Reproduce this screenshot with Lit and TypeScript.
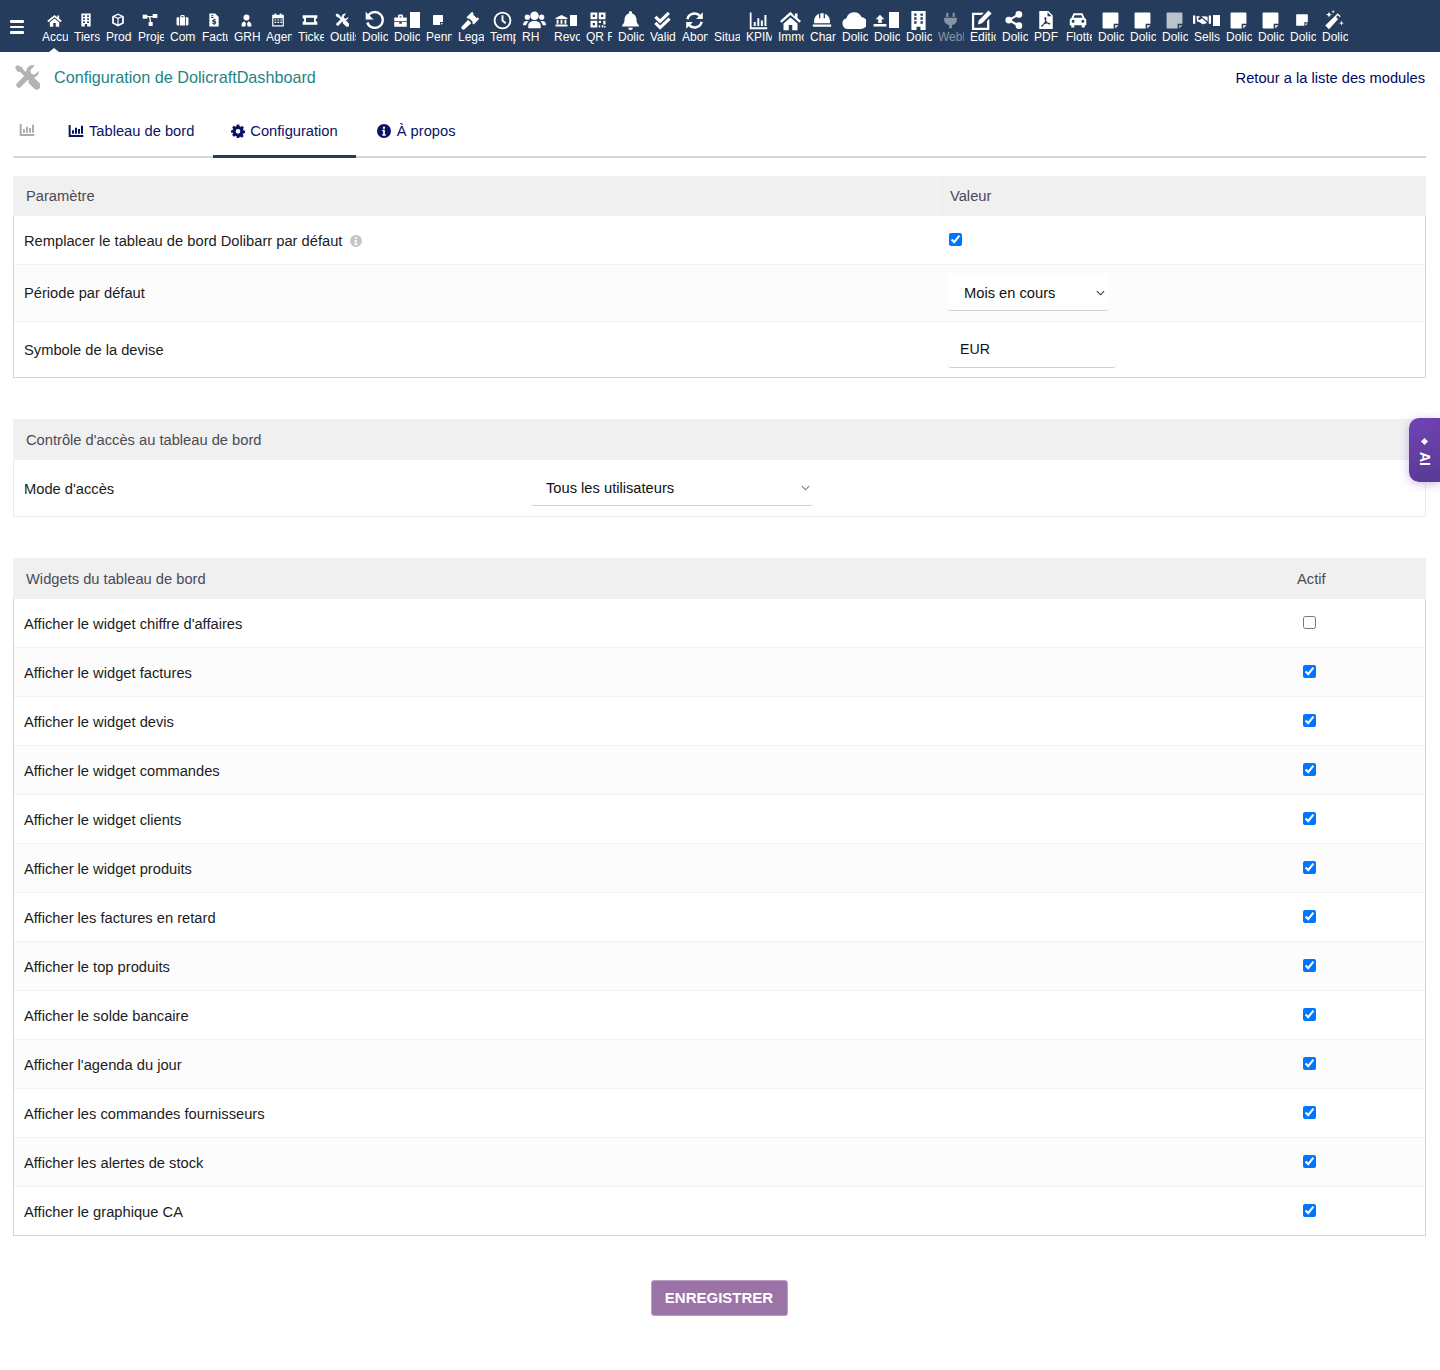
import { LitElement, html, css, svg } from "lit";
import { customElement } from "lit/decorators.js";

// hand drawn icons, all on a 24x24 box, filled with currentColor unless stated
const ICONS: Record<string, unknown> = {
    home: svg`<path d="M12 3 0.5 12.5 2.3 14.6 12 6.6l9.7 8 1.8-2.1-4-3.3V4h-3v2.7z"/><path d="M12 8.6 4.5 14.8V22h5.5v-6h4v6h5.5v-7.2z"/>`,
    building: svg`<path fill-rule="evenodd" d="M4 1h16v22h-6v-4h-4v4H4zM7 4v3h3V4zm7 0v3h3V4zM7 9v3h3V9zm7 0v3h3V9zM7 14v3h3v-3zm7 0v3h3v-3z"/>`,
    cube: svg`<path fill-rule="evenodd" d="M12 1 22 5.5v12.5L12 23 2 18V5.5zM5 7.2v9l6 3v-9.4zm8 2.6v9.4l6-3V7.300zM6.500 5.600 12 8l5.500-2.400L12 3.300z"/>`,
    project: svg`<rect x="1" y="4" width="7" height="6"/><rect x="16" y="3" width="7" height="6"/><rect x="10" y="15" width="6" height="6"/><path d="M7 6h10v2H12.500l1.500 8h-2L10.500 8H7z"/>`,
    briefcase: svg`<path fill-rule="evenodd" d="M8 6V4a2 2 0 0 1 2-2h4a2 2 0 0 1 2 2v2h5a2 2 0 0 1 2 2v11a2 2 0 0 1-2 2H3a2 2 0 0 1-2-2V8a2 2 0 0 1 2-2zm2-2v2h4V4zM5.500 6v15h1.500V6zM17 6v15h1.500V6z"/>`,
    toolbox: svg`<path fill-rule="evenodd" d="M8 7V4.500A2 2 0 0 1 10 2.500h4a2 2 0 0 1 2 2V7h6v6H2V7zm2.500-2v2h3V5zM2 14.500h8V17h4v-2.500h8V22H2z"/>`,
    invoice: svg`<path fill-rule="evenodd" d="M4 1h10l6 6v16H4zM7 4v1.500h4V4zm0 3v1.500h4V7zm6.500 3h-2v1.200c-1.500.3-2.500 1.200-2.500 2.500 0 1.400 1 2 2.700 2.500 1 .3 1.300.5 1.300.9s-.4.6-1 .6c-.8 0-1.600-.3-2.300-.8L8.700 18c.7.5 1.700.9 2.800 1v1.500h2V19c1.500-.3 2.500-1.200 2.500-2.600s-1-2.100-2.700-2.600c-1-.3-1.300-.5-1.300-.8s.3-.6 1-.6 1.300.2 1.900.6l1-1.400c-.7-.5-1.500-.8-2.400-.9z"/>`,
    usertie: svg`<circle cx="12" cy="6.500" r="5.500"/><path d="M3 23v-3c0-3.500 2.500-6 6-6l2 4-1 5zM21 23v-3c0-3.500-2.500-6-6-6l-2 4 1 5z"/>`,
    calendar: svg`<path fill-rule="evenodd" d="M6 1h3v2h6V1h3v2h4v20H2V3h4zM4 9v12h16V9zm2 2h3v2H6zm5 0h3v2h-3zm5 0h3v2h-3zM6 15h3v2H6zm5 0h3v2h-3zm5 0h3v2h-3z"/>`,
    ticket: svg`<path fill-rule="evenodd" d="M1 5h22v4.500a2.500 2.500 0 0 0 0 5V19H1v-4.500a2.500 2.500 0 0 0 0-5zm5 3.500v7h12v-7z"/>`,
    tools: svg`<path d="M3 1 1 3l2 4 3 .5 8 8.500-1 1 5.500 5.500a3.500 3.500 0 0 0 5-5L18 12l-1 1-8.500-8L7.500 3z"/><path d="M17 1a6 6 0 0 0-5.500 8L2 18.500a3 3 0 0 0 3.500 3.500l9.500-9.500a6 6 0 0 0 8-6l-4 3.500-3-1-1-3L19 1.300z"/>`,
    undo: svg`<path fill="none" stroke="currentColor" stroke-width="2.800" d="M5.200 6.500A9.500 9.500 0 1 1 4 15"/><path d="M2 2v9.500h9.500z"/>`,
    note: svg`<path d="M3 2h18a1 1 0 0 1 1 1v13h-6v6H3a1 1 0 0 1-1-1V3a1 1 0 0 1 1-1z"/><path d="M18 18h4l-4 4z"/>`,
    gavel: svg`<path d="M14 1 7 8l2 2 1-1 5 5-1 1 2 2 7-7-2-2-1 1-5-5 1-1z"/><path d="M9 11 1 19.500a2.500 2.500 0 0 0 3.500 3.500L13 15z"/>`,
    clock: svg`<circle cx="12" cy="12" r="10" fill="none" stroke="currentColor" stroke-width="2.400"/><path fill="none" stroke="currentColor" stroke-width="2.400" d="M12 5.500V12l4 3.500"/>`,
    users: svg`<circle cx="12" cy="7" r="4.500"/><circle cx="4.500" cy="8.500" r="2.700"/><circle cx="19.500" cy="8.500" r="2.700"/><path d="M5.500 20v-2.500c0-3 2.500-5 6.500-5s6.500 2 6.500 5V20zM0 16.500c0-2.500 1.500-4 4-4 .6 0 1.500.2 2 .5-1.500 1-2.300 2.300-2.500 4H0zM24 16.500c0-2.500-1.500-4-4-4-.6 0-1.500.2-2 .5 1.500 1 2.300 2.300 2.500 4H24z"/>`,
    bank: svg`<path d="M12 2 1 7.500V9h22V7.500zM3 10.500h3.500V18H3zM10.200 10.500h3.500V18h-3.500zM17.500 10.500H21V18h-3.500zM1 19.500h22V23H1z"/>`,
    qr: svg`<path fill-rule="evenodd" d="M2 2h9v9H2zm3 3v3h3V5zM13 2h9v9h-9zm3 3v3h3V5zM2 13h9v9H2zm3 3v3h3v-3zM13 13h3v3h-3zM19 13h3v5h-3zM13 19h2v3h-2zM17 19h2v3h-2zM20 20h2v2h-2z"/>`,
    bell: svg`<path d="M12 0a2 2 0 0 0-2 2v1C6.500 4 4.500 6.800 4.500 10.500c0 4-1 5.500-3 7.500v1.500h21V18c-2-2-3-3.500-3-7.500 0-3.700-2-6.500-5.500-7.500V2a2 2 0 0 0-2-2zM9 21a3 3 0 0 0 6 0z"/>`,
    checks: svg`<path fill="none" stroke="currentColor" stroke-width="4" d="M3 7.500 9 13 20 2.500M3 15l6 6L21 9.500"/>`,
    sync: svg`<path fill="none" stroke="currentColor" stroke-width="3.200" d="M3 10.500a9.200 9.200 0 0 1 16-4M21 13.500a9.200 9.200 0 0 1-16 4"/><path d="M22.500 1.500v8.500H14zM1.500 22.500V14H10z"/>`,
    chart: svg`<path d="M1 2h2.200v18.500H23V23H1zM6 14h2.500v5H6zM10.500 9h2.500v10h-2.500zM15 12h2.500v7H15zM19.500 5H22v14h-2.500z"/>`,
    tabchart: svg`<path d="M1 3h3v15h19v3H1zM6 11h3v5H6zM10.500 7h3v9h-3zM15 9h3v7h-3zM19.500 4h3v12h-3z"/>`,
    house: svg`<path d="M12 2 0 12.500l1.800 2L12 5.600l10.200 8.900 1.800-2-4-3.500V4h-3v3.400z"/><path d="M12 8.500 4 15.500V23h6v-6h4v6h6v-7.500z"/>`,
    hardhat: svg`<path d="M10 4h4v6h1.500V4.500C19 5.800 21.500 9 21.500 13v3H2.500v-3c0-4 2.500-7.200 6-8.500V10H10zM1 17.500h22V20H1z"/>`,
    cloud: svg`<path d="M6 21a5.500 5.500 0 0 1-1.500-10.800A8 8 0 0 1 19.500 9 6 6 0 0 1 18.500 21z"/>`,
    upload: svg`<path d="M12 3 4.500 10.500H9V17h6v-6.500h4.500zM1 19h22v4H1z"/>`,
    tower: svg`<path fill-rule="evenodd" d="M3 0h18v24h-6.500v-4h-5v4H3zM6.500 3v3h3V3zm8 0v3h3V3zm-8 5v3h3V8zm8 0v3h3V8zm-8 5v3h3v-3zm8 0v3h3v-3z"/>`,
    plug: svg`<path d="M6 1h3v6H6zM15 1h3v6h-3zM3 8h18v3c0 4-3 7-7 7.500V23h-4v-4.500C6 18 3 15 3 11z"/>`,
    edit: svg`<path fill-rule="evenodd" d="M1 4h13l-2.500 2.500H3.500V20.500h14V13l2.500-2.500V23H1z"/><path d="M19 1.500 22.500 5 12 15.500 7.500 17l1-4.500z"/>`,
    share: svg`<circle cx="18.500" cy="4.500" r="4.500"/><circle cx="18.500" cy="19.500" r="4.500"/><circle cx="5" cy="12" r="4.500"/><path d="m5 10.500 12-7 1.500 2.500-12 7zM5 13.500l12 7 1.500-2.500-12-7z"/>`,
    pdf: svg`<path fill-rule="evenodd" d="M3 0h12l6 6v18H3zM14 1.500V7h5.500zM11 8c-1 0-1.300 1-1 2.500.1.800.4 1.700.8 2.500-.7 1.800-1.700 3.500-2.800 4.700-1.500.7-2.500 1.500-2.500 2.300 0 .8 1 1.200 1.800.5.800-.6 1.600-1.600 2.400-2.900 1.300-.5 2.800-.8 4-.9 1 .9 2 1.300 2.800 1.300 1 0 1.300-.8 1-1.400-.4-.7-1.800-.9-3-.8-.9-.9-1.700-2-2.300-3.200.4-1.500.5-3 0-3.800C11.900 8.300 11.500 8 11 8z"/>`,
    car: svg`<path fill-rule="evenodd" d="M6 3h12l3 6.500c1.300.5 2 1.500 2 2.800V19h-2v3h-4v-3H7v3H3v-3H1v-6.700C1 11 1.700 10 3 9.500zm1.500 2.500L6 9h12l-1.500-3.500zM5.500 11.500a2 2 0 1 0 0 4 2 2 0 0 0 0-4zm13 0a2 2 0 1 0 0 4 2 2 0 0 0 0-4z"/>`,
    handshake: svg`<path d="M0 6h3v11H0zM21 6h3v11h-3zM4.500 7h5L7 10c-.8 1.200.8 2.800 2.500 1.500L12 9.500l6.500 6-1.500 1.500-1-.8-1 1.300-1-.7-1 1.200-4-3-3.500-1zM11 7h4l4.500.5V14z"/>`,
    wand: svg`<path d="M16.500 4 20 7.500 6 23 1.500 18.500zM14.500 8.500 17 11l2-2.200-2.500-2.500z"/><path d="M6 2l1 2.500L9.500 5.500 7 6.500 6 9 5 6.500 2.500 5.500 5 4.500zM21 13l.8 2 2 .8-2 .8-.8 2-.8-2-2-.8 2-.8zM11 0l.6 1.400L13 2l-1.400.6L11 4l-.6-1.400L9 2l1.400-.6z"/>`,
    gear: svg`<path fill-rule="evenodd" d="M10 1h4l.7 3c.7.2 1.300.5 1.900.9l2.700-1.600 2.800 2.800L20.500 8.800c.4.600.6 1.200.8 1.900l2.700.7v4l-2.900.7c-.2.700-.5 1.300-.9 1.900l1.500 2.600-2.800 2.800-2.600-1.500c-.6.400-1.200.6-1.900.8L14 24h-4l-.7-2.900c-.7-.2-1.300-.5-1.900-.9l-2.600 1.500-2.800-2.800 1.500-2.600c-.4-.6-.6-1.200-.8-1.900L0 15v-4l2.700-.7c.2-.7.500-1.300.9-1.900L2.100 5.700 4.900 2.900 7.500 4.500c.6-.4 1.200-.7 1.900-.9zM12 8.500a4 4 0 1 0 0 8 4 4 0 0 0 0-8z"/>`,
    info: svg`<path fill-rule="evenodd" d="M12 0a12 12 0 1 1 0 24 12 12 0 0 1 0-24zm-1.800 4.500v3.500h3.600V4.500zM9 10v2.500h1.500v5H9V20h6v-2.500h-1.500V10z"/>`,
};

type NavItem = {
    label: string;
    icon?: string;
    size?: number;
    // some modules show a second sticky-note glyph next to their icon
    note?: "big" | "small";
    dim?: boolean;
    grey?: boolean;
};

const NAV: NavItem[] = [
    { label: "Accueil", icon: "home", size: 15 },
    { label: "Tiers", icon: "building", size: 14 },
    { label: "Produits", icon: "cube", size: 14 },
    { label: "Projets", icon: "project", size: 16 },
    { label: "Commerce", icon: "briefcase", size: 13 },
    { label: "Facturation", icon: "invoice", size: 14 },
    { label: "GRH", icon: "usertie", size: 13 },
    { label: "Agenda", icon: "calendar", size: 14 },
    { label: "Tickets", icon: "ticket", size: 16 },
    { label: "Outils", icon: "tools", size: 14 },
    { label: "Dolicraft", icon: "undo", size: 20 },
    { label: "Dolicraft", icon: "toolbox", size: 15, note: "big" },
    { label: "Pennylane", icon: "note", size: 12 },
    { label: "Legal", icon: "gavel", size: 19 },
    { label: "Temps", icon: "clock", size: 19 },
    { label: "RH", icon: "users", size: 23 },
    { label: "Revolut", icon: "bank", size: 13, note: "small" },
    { label: "QR Facture", icon: "qr", size: 18 },
    { label: "Dolicraft", icon: "bell", size: 19 },
    { label: "Validation", icon: "checks", size: 19 },
    { label: "Abonnements", icon: "sync", size: 19 },
    { label: "Situation" },
    { label: "KPIManager", icon: "chart", size: 19 },
    { label: "Immobilier", icon: "house", size: 21 },
    { label: "Chantiers", icon: "hardhat", size: 20 },
    { label: "Dolicraft", icon: "cloud", size: 24 },
    { label: "Dolicraft", icon: "upload", size: 14, note: "big" },
    { label: "Dolicraft", icon: "tower", size: 19 },
    { label: "Webhooks", icon: "plug", size: 17, dim: true },
    { label: "Edition", icon: "edit", size: 22 },
    { label: "Dolicraft", icon: "share", size: 18 },
    { label: "PDF", icon: "pdf", size: 18 },
    { label: "Flotte", icon: "car", size: 18 },
    { label: "Dolicraft", icon: "note", size: 19 },
    { label: "Dolicraft", icon: "note", size: 19 },
    { label: "Dolicraft", icon: "note", size: 19, grey: true },
    { label: "Sells", icon: "handshake", size: 18, note: "small" },
    { label: "Dolicraft", icon: "note", size: 19 },
    { label: "Dolicraft", icon: "note", size: 19 },
    { label: "Dolicraft", icon: "note", size: 14 },
    { label: "Dolicraft", icon: "wand", size: 20 },
];

const WIDGETS: { label: string; on: boolean }[] = [
    { label: "Afficher le widget chiffre d'affaires", on: false },
    { label: "Afficher le widget factures", on: true },
    { label: "Afficher le widget devis", on: true },
    { label: "Afficher le widget commandes", on: true },
    { label: "Afficher le widget clients", on: true },
    { label: "Afficher le widget produits", on: true },
    { label: "Afficher les factures en retard", on: true },
    { label: "Afficher le top produits", on: true },
    { label: "Afficher le solde bancaire", on: true },
    { label: "Afficher l'agenda du jour", on: true },
    { label: "Afficher les commandes fournisseurs", on: true },
    { label: "Afficher les alertes de stock", on: true },
    { label: "Afficher le graphique CA", on: true },
];

const icon = (name: string, size: number) => html`<svg
    class="ico"
    viewBox="0 0 24 24"
    width=${size}
    height=${size}
    fill="currentColor"
>
    ${ICONS[name]}
</svg>`;

const chevron = html`<svg class="chev" viewBox="0 0 10 6" width="9" height="6">
    <path d="M1 1l4 4 4-4" fill="none" stroke="currentColor" stroke-width="1.200" />
</svg>`;

@customElement("app-root")
export class AppRoot extends LitElement {
    private _renderNav(item: NavItem, i: number) {
        return html`
            <a class="nav-item ${item.dim ? "dim" : ""}">
                <span class="nav-ico ${item.grey ? "grey" : ""}">
                    ${item.icon ? icon(item.icon, item.size ?? 16) : ""}
                    ${item.note ? html`<span class="nav-note ${item.note}"></span>` : ""}
                </span>
                <span class="nav-label">${item.label}</span>
                ${i === 0 ? html`<span class="nav-caret"></span>` : ""}
            </a>
        `;
    }

    render() {
        return html`
            <header class="topbar">
                <div class="burger"><i></i><i></i><i></i></div>
                <nav class="nav">${NAV.map((n, i) => this._renderNav(n, i))}</nav>
            </header>

            <main class="page">
                <div class="title-row">
                    <span class="title-ico">${icon("tools", 26)}</span>
                    <h1>Configuration de DolicraftDashboard</h1>
                    <a class="back">Retour a la liste des modules</a>
                </div>

                <div class="tabs">
                    <span class="tab-logo">${icon("tabchart", 16)}</span>
                    <a class="tab">${icon("tabchart", 16)}Tableau de bord</a>
                    <a class="tab active">${icon("gear", 14)}Configuration</a>
                    <a class="tab">${icon("info", 14)}À propos</a>
                </div>

                <section class="tbl">
                    <div class="head two">
                        <div>Paramètre</div>
                        <div class="sep">Valeur</div>
                    </div>
                    <div class="row two r1">
                        <div class="lbl">
                            <span>Remplacer le tableau de bord Dolibarr par défaut</span>
                            <span class="hint">${icon("info", 12)}</span>
                        </div>
                        <div class="val"><input type="checkbox" checked /></div>
                    </div>
                    <div class="row two r2 alt">
                        <div class="lbl">Période par défaut</div>
                        <div class="val">
                            <label class="sel period">
                                <select>
                                    <option>Mois en cours</option>
                                </select>
                                ${chevron}
                            </label>
                        </div>
                    </div>
                    <div class="row two r3">
                        <div class="lbl">Symbole de la devise</div>
                        <div class="val"><input class="txt" value="EUR" /></div>
                    </div>
                </section>

                <section class="tbl light">
                    <div class="head"><div>Contrôle d'accès au tableau de bord</div></div>
                    <div class="row access">
                        <div class="lbl">Mode d'accès</div>
                        <label class="sel mode">
                            <select>
                                <option>Tous les utilisateurs</option>
                            </select>
                            ${chevron}
                        </label>
                    </div>
                </section>

                <section class="tbl">
                    <div class="head widgets">
                        <div>Widgets du tableau de bord</div>
                        <div class="actif">Actif</div>
                    </div>
                    ${WIDGETS.map(
                        (w, i) => html`
                            <div class="row w ${i % 2 ? "alt" : ""}">
                                <div class="lbl">${w.label}</div>
                                <div class="chk"><input type="checkbox" ?checked=${w.on} /></div>
                            </div>
                        `,
                    )}
                </section>

                <div class="actions"><button class="save">ENREGISTRER</button></div>
            </main>

            <button class="ai"><span class="ai-dot"></span><span class="ai-txt">AI</span></button>
        `;
    }

    static styles = css`
        :host {
            display: block;
            position: relative;
            min-height: 1370px;
            background: #fff;
            font-family: "Liberation Sans", Arial, sans-serif;
            font-size: 14.7px;
            color: #1c1c1c;
        }
        .topbar {
            display: flex;
            height: 52px;
            background: #263c5c;
            color: #fff;
        }
        .burger {
            display: flex;
            flex-direction: column;
            gap: 3px;
            width: 38px;
            padding: 20px 0 0 10px;
            box-sizing: border-box;
        }
        .burger i {
            display: block;
            width: 14px;
            height: 2.500px;
            background: #fff;
            border-radius: 1px;
        }
        .nav {
            display: flex;
        }
        .nav-item {
            position: relative;
            display: flex;
            flex-direction: column;
            align-items: center;
            width: 32px;
            height: 52px;
        }
        .nav-item.dim {
            opacity: 0.45;
        }
        .nav-ico {
            display: flex;
            align-items: center;
            justify-content: center;
            gap: 2px;
            height: 20px;
            margin-top: 10px;
        }
        .nav-ico.grey {
            color: #bcc2cc;
        }
        .nav-note {
            display: block;
            flex: none;
            background: #fff;
        }
        .nav-note.big {
            width: 10px;
            height: 16px;
        }
        .nav-note.small {
            width: 7px;
            height: 11px;
        }
        .nav-label {
            display: block;
            width: 26px;
            height: 14px;
            overflow: hidden;
            margin-left: 2px;
            font-size: 12px;
            line-height: 14px;
            white-space: nowrap;
            text-align: left;
        }
        .nav-caret {
            position: absolute;
            left: 11px;
            bottom: 0;
            border: 5px solid transparent;
            border-top: 0;
            border-bottom: 4px solid #fff;
        }
        .ico {
            display: block;
            flex: none;
        }
        .page {
            padding: 0 14px 0 13px;
        }
        .title-row {
            display: flex;
            align-items: center;
            height: 50px;
        }
        .title-ico {
            color: #b3b3b3;
            margin: 0 14px 0 1px;
        }
        h1 {
            flex: 1;
            margin: 0;
            font-size: 16.2px;
            font-weight: 400;
            color: #1d8584;
        }
        .back {
            color: #000a5f;
            padding: 2px 1px 0 0;
        }
        .tabs {
            display: flex;
            align-items: flex-end;
            height: 54px;
            border-bottom: 2px solid #d8d8d8;
        }
        .tab-logo {
            align-self: flex-start;
            color: #adadad;
            width: 37px;
            padding: 20px 0 0 6px;
            box-sizing: border-box;
        }
        .tab {
            display: flex;
            align-items: center;
            gap: 5px;
            height: 54px;
            box-sizing: border-box;
            padding: 3px 18px 0;
            margin-right: 1px;
            color: #0a1464;
            border-bottom: 3px solid transparent;
            margin-bottom: -2px;
        }
        .tab:last-child {
            gap: 6px;
        }
        .tab.active {
            border-bottom-color: #263c5c;
            margin-right: 3px;
        }
        .tbl {
            margin-top: 41px;
            border: 1px solid #d4d4d4;
            border-top: 0;
        }
        .tabs + .tbl {
            margin-top: 18px;
        }
        .tbl.light {
            border-color: #ececec;
        }
        .head {
            display: grid;
            align-items: center;
            height: 41px;
            margin: 0 -1px;
            background: #f0f0f0;
            color: #4a4a55;
            padding-left: 13px;
        }
        .head.two {
            height: 40px;
            grid-template-columns: 911px 1fr;
        }
        .head.widgets {
            grid-template-columns: 1271px 1fr;
        }
        .sep {
            align-self: stretch;
            display: flex;
            align-items: center;
            padding-left: 12px;
            border-left: 1px solid #f6f6f6;
        }
        .row {
            display: grid;
            align-items: center;
            padding-left: 10px;
            border-top: 1px solid #f2f2f2;
        }
        .head + .row {
            border-top: 0;
        }
        .row.alt {
            background: #fcfcfc;
        }
        .row.two {
            grid-template-columns: 924px 1fr;
        }
        .r1 {
            height: 48px;
        }
        .r2 {
            height: 56px;
        }
        .r3 {
            height: 55px;
        }
        .row.access {
            height: 56px;
            grid-template-columns: 507px 1fr;
        }
        .w {
            height: 48px;
            grid-template-columns: 1268px 1fr;
        }
        .lbl {
            display: flex;
            align-items: center;
        }
        .r1 .lbl,
        .access .lbl,
        .w .lbl {
            padding-top: 2px;
        }
        .hint {
            color: #c4c4c4;
            margin-left: 8px;
        }
        .val {
            display: flex;
            align-items: center;
        }
        input[type="checkbox"] {
            display: block;
            width: 13px;
            height: 13px;
            margin: 0 0 1px;
            accent-color: #0075ff;
        }
        .val input[type="checkbox"] {
            margin-left: 1px;
            margin-bottom: 2px;
        }
        .chk {
            padding-left: 11px;
        }
        .sel {
            position: relative;
            display: block;
        }
        .sel select {
            display: block;
            width: 100%;
            height: 36px;
            border: 0;
            border-bottom: 1px solid #d0d0d0;
            border-radius: 3px;
            background: #fff;
            font: inherit;
            color: #111;
            padding: 0 0 0 16px;
            appearance: none;
            outline: 0;
        }
        .sel .chev {
            position: absolute;
            top: 15px;
            right: 3px;
            color: #333;
            pointer-events: none;
        }
        .period {
            width: 160px;
        }
        .mode {
            width: 282px;
        }
        .mode .chev {
            color: #777;
        }
        .mode select {
            padding-left: 15px;
        }
        .txt {
            display: block;
            width: 168px;
            height: 36px;
            box-sizing: border-box;
            border: 0;
            border-bottom: 1px solid #d0d0d0;
            border-radius: 3px;
            padding: 0 0 0 12px;
            font: 14.2px "Liberation Sans", Arial, sans-serif;
            color: #111;
            outline: 0;
        }
        .actions {
            display: flex;
            justify-content: center;
            margin-top: 44px;
            padding-right: 1px;
        }
        .save {
            width: 137px;
            height: 36px;
            border: 1px solid #bb9fc4;
            border-radius: 3px;
            background: #9b73a6;
            color: #fff;
            font: bold 15px "Liberation Sans", Arial, sans-serif;
            padding: 0 0 2px;
        }
        .ai {
            position: absolute;
            top: 418px;
            right: 0;
            display: flex;
            flex-direction: column;
            align-items: center;
            justify-content: center;
            gap: 8px;
            width: 31px;
            height: 64px;
            padding: 4px 0 0;
            border: 0;
            border-radius: 10px 0 0 10px;
            background: linear-gradient(160deg, #7143b5, #573a94);
            box-shadow: 0 2px 10px rgba(100, 60, 170, 0.35);
            color: #fff;
        }
        .ai-dot {
            width: 5px;
            height: 5px;
            background: #fff;
            transform: rotate(45deg);
        }
        .ai-txt {
            writing-mode: vertical-rl;
            font: bold 14px "Liberation Sans", Arial, sans-serif;
        }
    `;
}
